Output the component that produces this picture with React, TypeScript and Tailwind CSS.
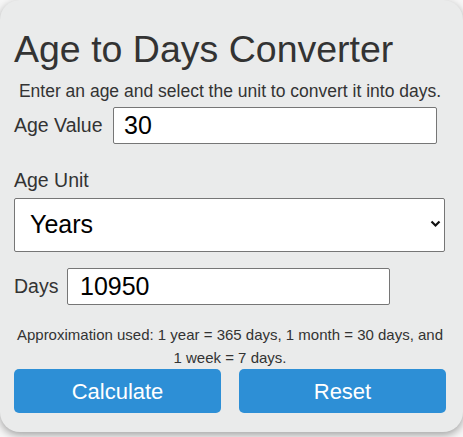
export default function App() {
    return (
        <div className="w-[463px] h-[437px] bg-[#f7f7f7] overflow-hidden" style={{ fontFamily: '"Liberation Sans", Arial, sans-serif' }}>
            {/* Card */}
            <div className="h-[432px] rounded-[20px] bg-[#eaebeb] shadow-[0_3px_8px_rgba(0,0,0,0.35)] pl-[14px] pr-[17px] pt-[28px]">
                <h1 className="text-[37.5px] leading-[42px] text-[#333]">Age to Days Converter</h1>
                <p className="mt-[11px] text-center text-[17.5px] leading-[20px] text-[#333]">
                    Enter an age and select the unit to convert it into days.
                </p>

                {/* Age value */}
                <div className="mt-[6px] flex items-center h-[37px]">
                    <label className="text-[19.5px] text-[#333] w-[99px]">Age Value</label>
                    <input
                        readOnly
                        value="30"
                        className="w-[324px] h-[37px] border border-[#767676] rounded-[2px] bg-white pl-[10px] text-[25px] text-black outline-none"
                    />
                </div>

                {/* Age unit */}
                <div className="mt-[25px] text-[19.5px] leading-[23px] text-[#333]">Age Unit</div>
                <div className="relative mt-[6px] w-[431px] h-[54px]">
                    <select
                        value="years"
                        onChange={() => {}}
                        className="appearance-none w-full h-full border border-[#767676] rounded-[2px] bg-white pl-[15px] text-[25px] text-black outline-none"
                    >
                        <option value="years">Years</option>
                        <option value="months">Months</option>
                        <option value="weeks">Weeks</option>
                    </select>
                    <svg className="absolute right-[4px] top-[22px] pointer-events-none" width="11" height="8" viewBox="0 0 11 8">
                        <path d="M1.5 1.5 L5.5 5.5 L9.5 1.5" fill="none" stroke="#111" strokeWidth="2.2" />
                    </svg>
                </div>

                {/* Days */}
                <div className="mt-[16px] flex items-center h-[37px]">
                    <label className="text-[19.5px] text-[#333] w-[53px]">Days</label>
                    <input
                        readOnly
                        value="10950"
                        className="w-[323px] h-[37px] border border-[#767676] rounded-[2px] bg-white pl-[12px] text-[25px] text-black outline-none"
                    />
                </div>

                {/* Note */}
                <p className="mt-[18px] text-center text-[15px] leading-[23px] text-[#333]">
                    Approximation used: 1 year = 365 days, 1 month = 30 days, and 1 week = 7 days.
                </p>

                {/* Buttons */}
                <div className="flex gap-[18px]">
                    <button className="flex-1 h-[44px] rounded-[5px] bg-[#2d8fd6] text-white text-[22px]">Calculate</button>
                    <button className="flex-1 h-[44px] rounded-[5px] bg-[#2d8fd6] text-white text-[22px]">Reset</button>
                </div>
            </div>
        </div>
    );
}
